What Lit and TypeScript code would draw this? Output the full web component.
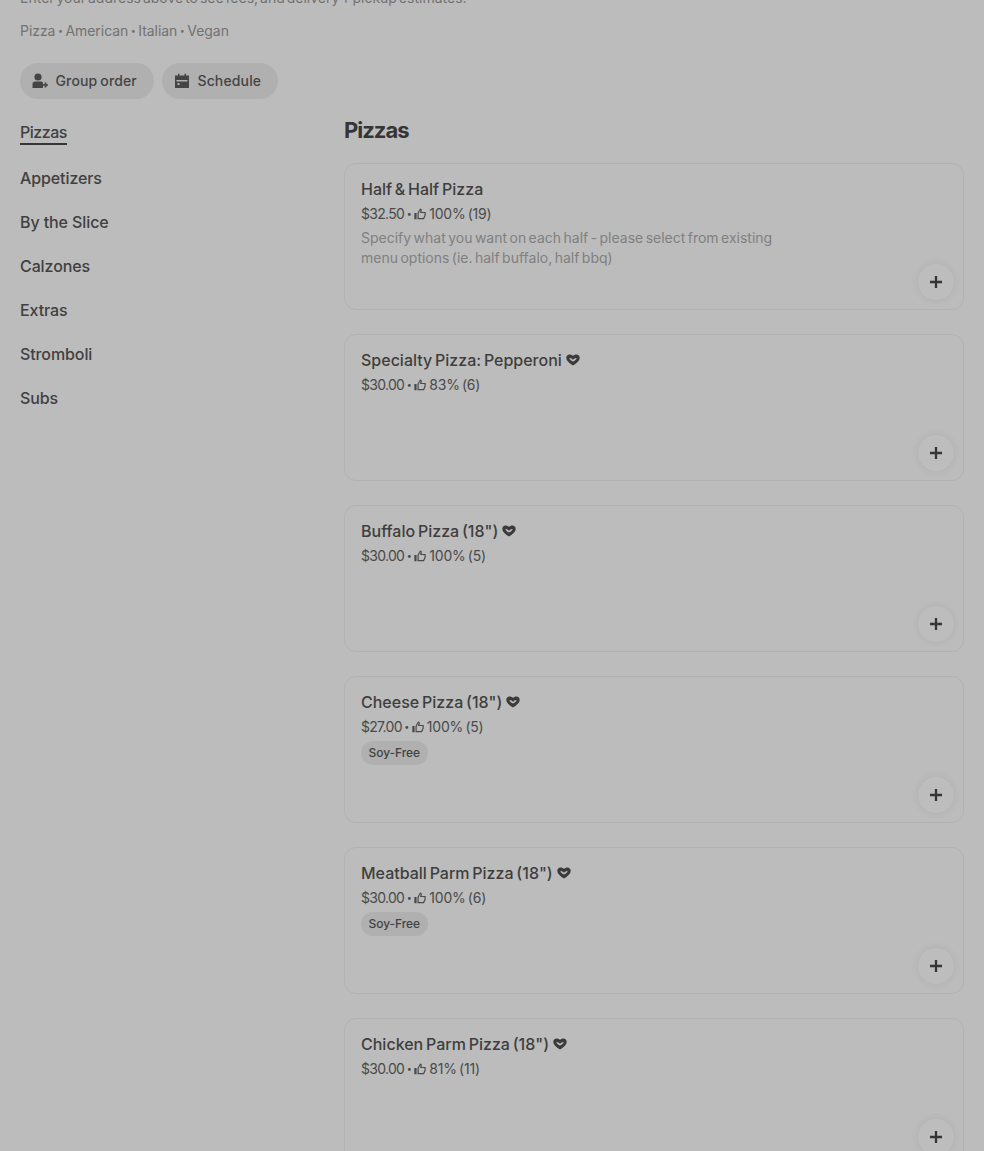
import { LitElement, html, css, svg } from "lit";
import { customElement } from "lit/decorators.js";

const thumb = svg`<svg class="thumb" viewBox="0 0 12 12" width="12" height="12"><path fill-rule="evenodd" d="M0.3 5H2.6V11.3H0.3ZM3.5 5L6 0.4C7.3 0.4 8 1.3 7.8 2.4L7.5 3.9H11.7V7.5L10 11.3H3.5ZM4.7 5.4V10.1H9.2L10.5 7.2V5.1H6.1L6.5 2.3L6.2 2Z" fill="currentColor"/></svg>`;
const heart = svg`<svg class="heart" viewBox="0 0 14 12" width="14" height="12"><path fill-rule="evenodd" d="M3.6 0.5C5 0.5 6.2 1 7 2C7.8 1 9 0.5 10.4 0.5C12.4 0.5 13.7 2 13.7 4C13.7 6.6 11 9 7 11.6C3 9 0.3 6.6 0.3 4C0.3 2 1.6 0.5 3.6 0.5ZM4 3.9C3.6 3.9 3.4 4.1 3.4 4.4C3.4 5.1 4.7 6.2 7 7.6C9.3 6.2 10.6 5.1 10.6 4.4C10.6 4.1 10.4 3.9 10 3.9C9.1 3.9 8.2 4.6 7 5.8C5.8 4.6 4.9 3.9 4 3.9Z" fill="currentColor"/></svg>`;
const groupIcon = svg`<svg viewBox="0 0 16 16" width="16" height="16"><circle cx="6" cy="4" r="3.6" fill="currentColor"/><path d="M0.5 15V11C0.5 9.5 1.5 8.6 3 8.6H9C10.2 8.6 11 9.3 11 10.3V15Z" fill="currentColor"/><path d="M11 12H16M13.5 9.6V14.4" stroke="currentColor" stroke-width="1.7" fill="none"/></svg>`;
const calIcon = svg`<svg viewBox="0 0 16 16" width="16" height="16"><path fill-rule="evenodd" d="M1 2.5H4V0.8H5.5V2.5H10.5V0.8H12V2.5H15V15H1ZM2.5 7V8.5H13.5V7ZM3.5 10V12H5.5V10Z" fill="currentColor"/></svg>`;

interface Item { name: string; price: string; pct: string; desc?: string; heart?: boolean; tag?: string; }
const items: Item[] = [
  { name: "Half & Half Pizza", price: "$32.50", pct: "100% (19)", desc: "Specify what you want on each half - please select from existing menu options (ie. half buffalo, half bbq)" },
  { name: "Specialty Pizza: Pepperoni", price: "$30.00", pct: "83% (6)", heart: true },
  { name: 'Buffalo Pizza (18")', price: "$30.00", pct: "100% (5)", heart: true },
  { name: 'Cheese Pizza (18")', price: "$27.00", pct: "100% (5)", heart: true, tag: "Soy-Free" },
  { name: 'Meatball Parm Pizza (18")', price: "$30.00", pct: "100% (6)", heart: true, tag: "Soy-Free" },
  { name: 'Chicken Parm Pizza (18")', price: "$30.00", pct: "81% (11)", heart: true },
];
const cats = ["Appetizers", "By the Slice", "Calzones", "Extras", "Stromboli", "Subs"];
const cuisines = ["Pizza", "American", "Italian", "Vegan"];

@customElement("app-root")
export class AppRoot extends LitElement {
  static styles = css`
    :host { display: block; height: 1151px; overflow: hidden; background: #bcbcbc; color: #353535; font-family: Inter, "Noto Sans", sans-serif; }
    .head { padding: 0 20px; margin-top: -12px; }
    .note { font-size: 14px; line-height: 20px; color: #727272; white-space: nowrap; word-spacing: -2px; }
    .cuisines { display: flex; font-size: 14px; line-height: 20px; color: #727272; margin-top: 13px; letter-spacing: -0.05px; }
    .sep { width: 10px; text-align: center; font-size: 9px; }
    .pills { display: flex; gap: 8px; margin-top: 22px; }
    .pill { box-sizing: border-box; display: flex; align-items: center; gap: 7.5px; height: 36px; padding: 0 17px 1px 12px; border-radius: 18px; background: #b0b0b0; font-size: 14px; font-weight: 500; color: #444; letter-spacing: 0.15px; word-spacing: -1px; }
    .main { display: flex; margin-top: 20px; padding: 0 20px; }
    .side { width: 324px; flex: none; font-size: 16px; font-weight: 500; color: #404040; letter-spacing: -0.1px; }
    .side .active { display: inline-block; line-height: 22px; padding-top: 2px; border-bottom: 2px solid #353535; margin: 0 0 21px; letter-spacing: -0.5px; }
    .side div.cat { line-height: 24px; margin-bottom: 20px; }
    .title { font-size: 22px; line-height: 28px; font-weight: 700; margin: -3px 0 19px; letter-spacing: -1px; }
    .list { flex: 1; display: flex; flex-direction: column; gap: 24px; }
    .card { position: relative; box-sizing: border-box; width: 620px; height: 147px; border: 1px solid #b2b2b2; border-radius: 12px; padding: 13px 16px; }
    .name { display: flex; align-items: center; gap: 4px; font-size: 16px; line-height: 24px; font-weight: 500; color: #3e3e3e; word-spacing: -1.5px; }
    .heart { color: #3b3b3b; }
    .meta { display: flex; align-items: center; font-size: 14px; line-height: 20px; color: #4a4a4a; margin-top: 3px; }
    .price { letter-spacing: -0.7px; }
    .dot { width: 10px; text-align: center; font-size: 9px; }
    .pct { letter-spacing: -0.2px; margin-left: 3px; word-spacing: -1.5px; }
    .desc { font-size: 14px; line-height: 20px; color: #808080; width: 430px; margin-top: 4px; word-spacing: -1.5px; }
    .tag { display: inline-block; font-size: 12px; line-height: 24px; padding: 0 8px 0 7.5px; border-radius: 12px; background: #b0b0b0; color: #424242; font-weight: 500; margin-top: 4px; letter-spacing: -0.05px; }
    .add { position: absolute; right: 9px; bottom: 9px; width: 36px; height: 36px; border-radius: 50%; background: #bdbdbd; box-shadow: 0 0 8px rgba(0,0,0,.07); display: flex; align-items: center; justify-content: center; color: #353535; }
  `;

  render() {
    return html`
      <div class="head">
        <div class="note">Enter your address above to see fees, and delivery + pickup estimates.</div>
        <div class="cuisines">${cuisines.map((c, n) => html`${n ? html`<span class="sep">•</span>` : ""}<span>${c}</span>`)}</div>
        <div class="pills">
          <div class="pill">${groupIcon}<span>Group order</span></div>
          <div class="pill">${calIcon}<span>Schedule</span></div>
        </div>
      </div>
      <div class="main">
        <div class="side">
          <div class="active">Pizzas</div>
          ${cats.map((c) => html`<div class="cat">${c}</div>`)}
        </div>
        <div class="content">
          <div class="title">Pizzas</div>
          <div class="list">
            ${items.map((i) => html`
              <div class="card">
                <div class="name"><span>${i.name}</span>${i.heart ? heart : ""}</div>
                <div class="meta"><span class="price">${i.price}</span><span class="dot">•</span>${thumb}<span class="pct">${i.pct}</span></div>
                ${i.desc ? html`<div class="desc">${i.desc}</div>` : ""}
                ${i.tag ? html`<span class="tag">${i.tag}</span>` : ""}
                <div class="add"><svg viewBox="0 0 14 14" width="14" height="14"><path d="M7 1V13M1 7H13" stroke="currentColor" stroke-width="2.3"/></svg></div>
              </div>`)}
          </div>
        </div>
      </div>
    `;
  }
}
